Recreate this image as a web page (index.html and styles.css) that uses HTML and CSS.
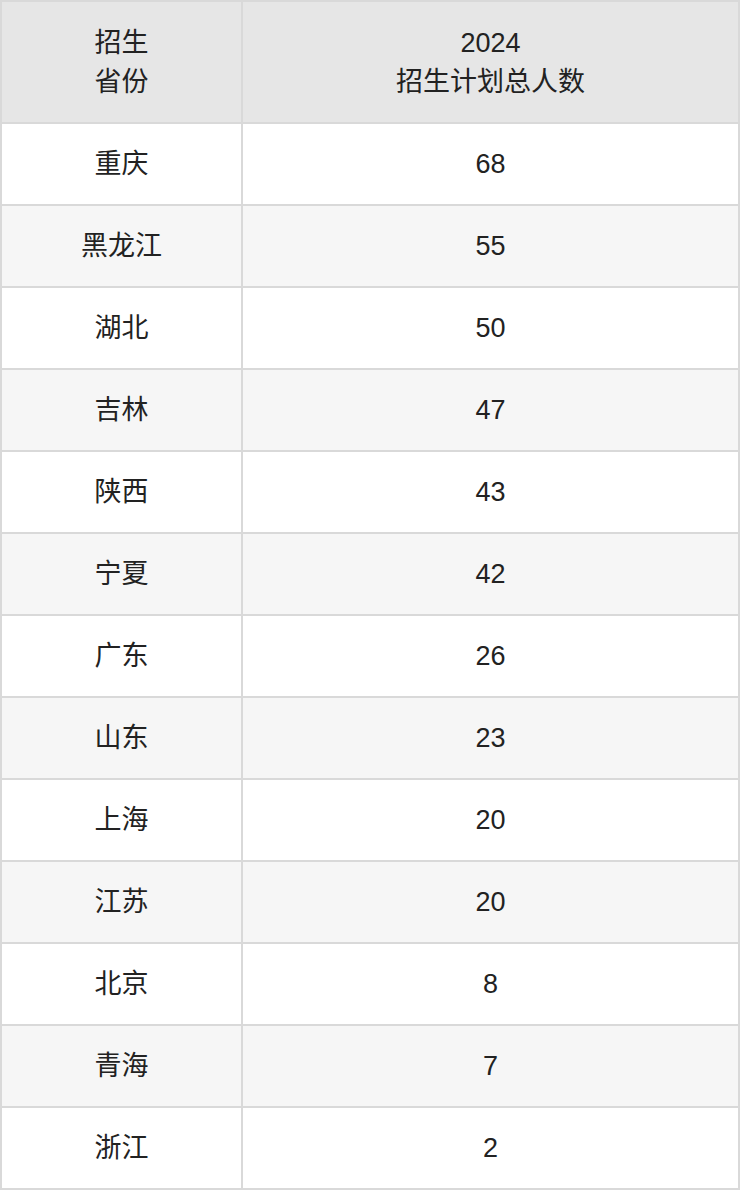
FILE: index.html
```html
<!DOCTYPE html>
<html lang="zh">
<head>
<meta charset="utf-8">
<link rel="stylesheet" href="styles.css">
</head>
<body>
<table class="plan">
  <thead>
    <tr><th class="prov">招生<br>省份</th><th>2024<br>招生计划总人数</th></tr>
  </thead>
  <tbody>
    <tr><td class="prov">重庆</td><td>68</td></tr>
    <tr><td class="prov">黑龙江</td><td>55</td></tr>
    <tr><td class="prov">湖北</td><td>50</td></tr>
    <tr><td class="prov">吉林</td><td>47</td></tr>
    <tr><td class="prov">陕西</td><td>43</td></tr>
    <tr><td class="prov">宁夏</td><td>42</td></tr>
    <tr><td class="prov">广东</td><td>26</td></tr>
    <tr><td class="prov">山东</td><td>23</td></tr>
    <tr><td class="prov">上海</td><td>20</td></tr>
    <tr><td class="prov">江苏</td><td>20</td></tr>
    <tr><td class="prov">北京</td><td>8</td></tr>
    <tr><td class="prov">青海</td><td>7</td></tr>
    <tr><td class="prov">浙江</td><td>2</td></tr>
  </tbody>
</table>
</body>
</html>
```
FILE: styles.css
```css
html, body {
  margin: 0;
  padding: 0;
  background: #fff;
}
.plan {
  width: 740px;
  border-collapse: separate;
  border-spacing: 2px;
  background: #d9d9d9;
  font-family: "Liberation Sans", "Noto Sans CJK SC", sans-serif;
  font-size: 27px;
  color: #222;
  table-layout: fixed;
}
.plan th, .plan td {
  padding: 0;
  text-align: center;
  vertical-align: middle;
}
.plan th {
  height: 119px;
  background: #e6e6e6;
  font-weight: normal;
  line-height: 39px;
  padding-top: 1px;
}
.plan td {
  height: 80px;
  background: #fff;
  line-height: 30px;
}
.plan tbody tr:nth-child(even) td {
  background: #f6f6f6;
}
.plan .prov {
  width: 239px;
}
```
